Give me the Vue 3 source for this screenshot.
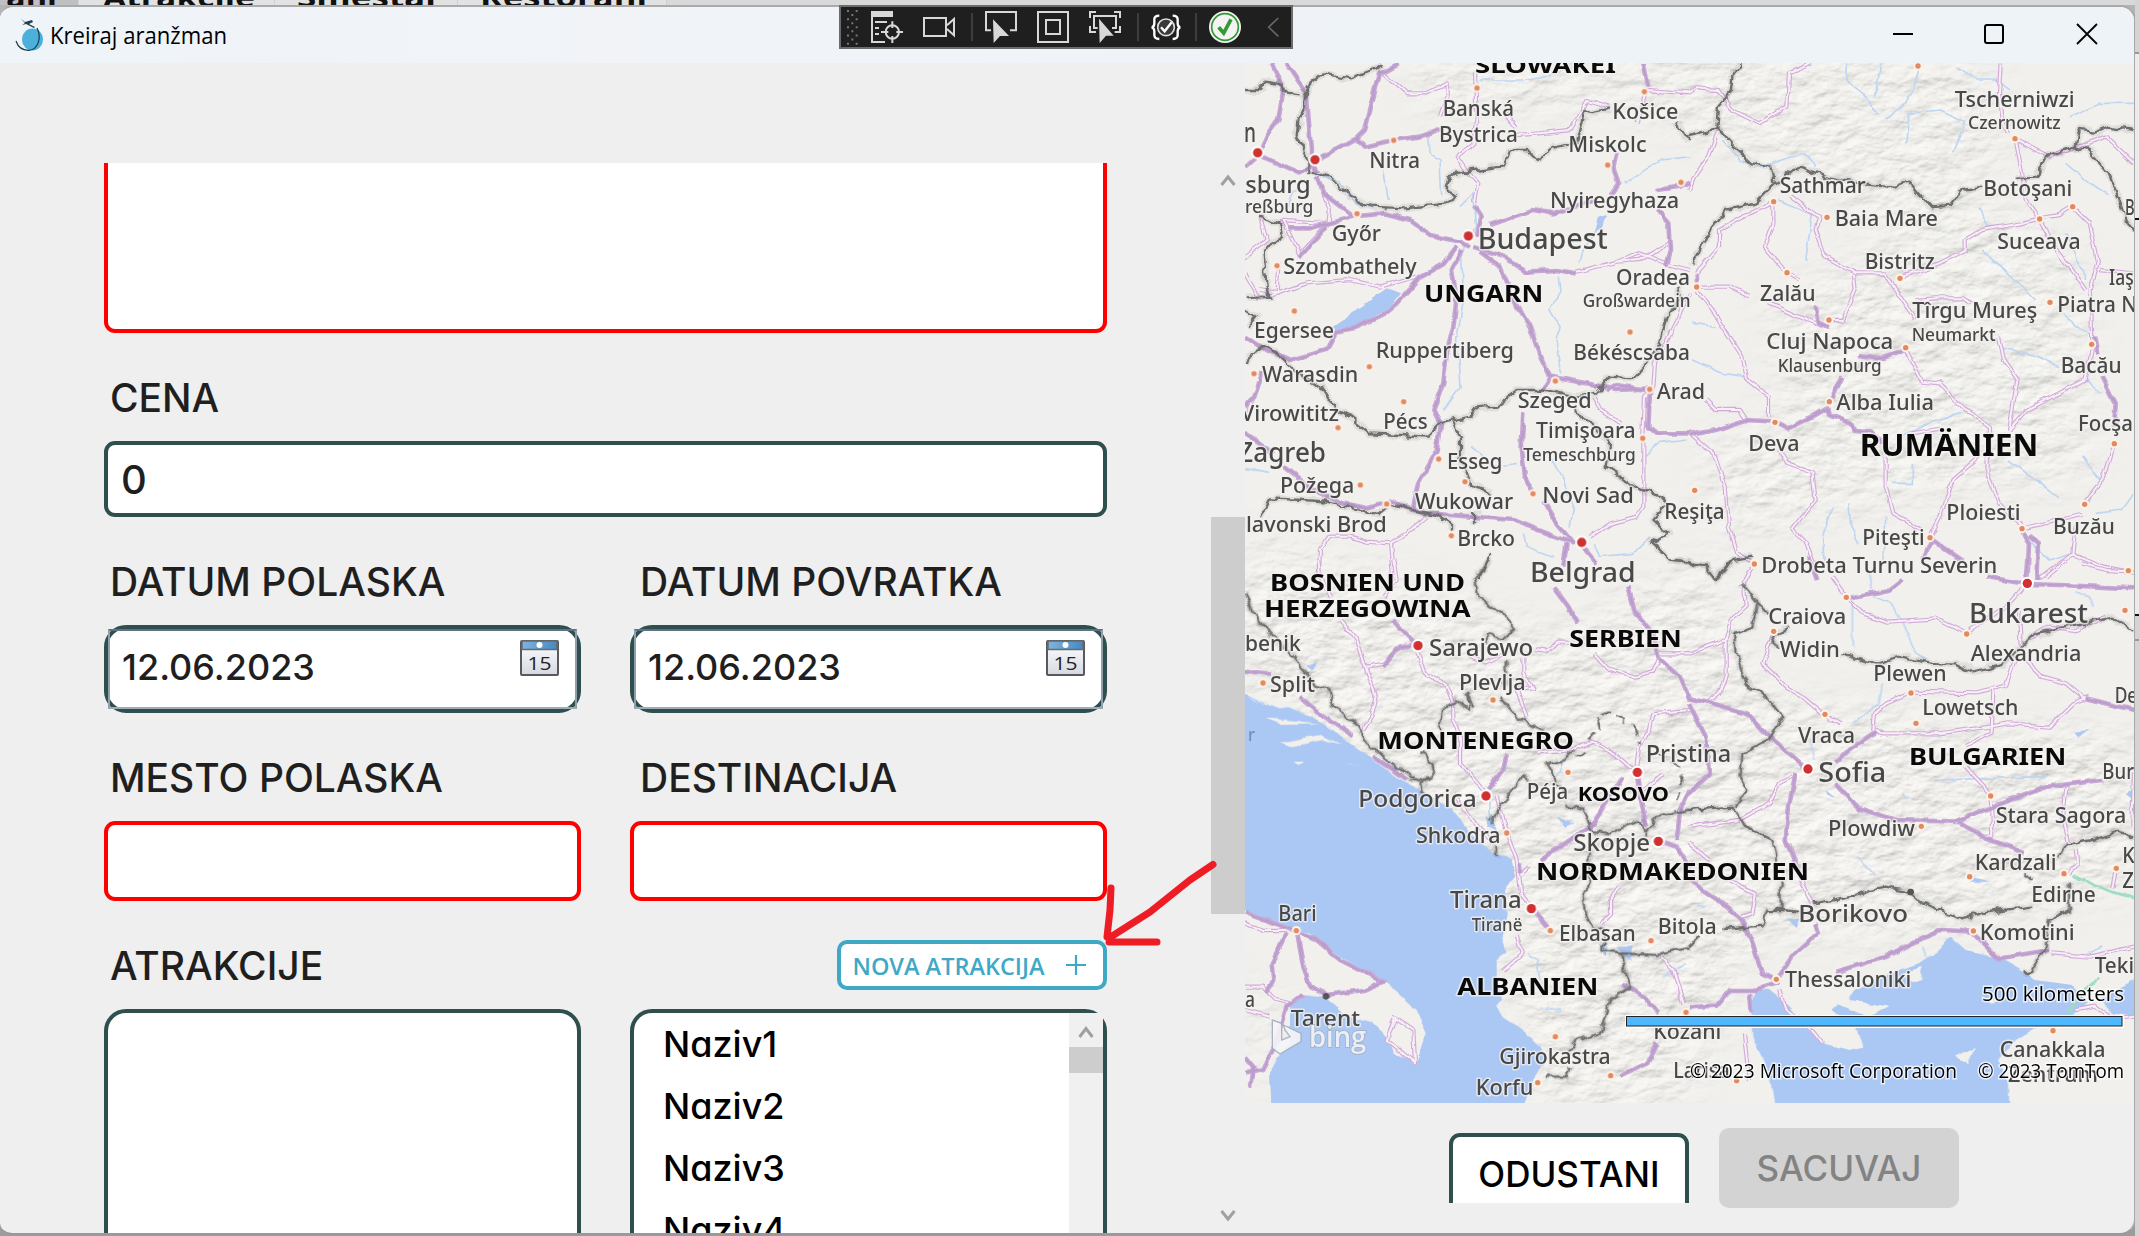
<script setup>
const tabs = [
  { text: 'ani', left: 0, width: 79, x: 6, w: 51, active: true },
  { text: 'Atrakcije', left: 79, width: 196, x: 24, w: 152 },
  { text: 'Smestaj', left: 275, width: 183, x: 22, w: 139 },
  { text: 'Restorani', left: 458, width: 209, x: 22, w: 167 },
]
const attractions = ['Naziv1', 'Naziv2', 'Naziv3', 'Naziv4']

// Every map tile is described in its own units, three per pixel.
const tiles = [
  {
    id: 'nw', x: 1240, y: 60,
    water: ['M275 800L350 750 440 685 480 700 450 740 380 785 300 815Z', 'M1060 520L1075 470 1100 460 1085 500Z'],
    rivers: [
      'M225 330L300 370 350 430 400 440', 'M660 440L700 400 710 500 665 580 670 720 650 840 660 980 610 1050',
      'M565 210L570 280 600 300 605 410', 'M430 330L445 420', 'M955 650L960 700 930 750 960 800 950 880 965 940',
      'M1350 290L1260 300 1180 350 1150 370', 'M720 60L850 60 950 40 1000 20', 'M930 1190L970 1260 1000 1350 990 1400',
      'M850 1420L860 1460 940 1490', 'M1060 1450L1080 1490 1180 1480 1230 1430', 'M15 1225L90 1240', 'M1020 610L1030 570 1070 510',
      'M690 1160L760 1220 830 1210', 'M1210 1190L1260 1150 1340 1140', 'M140 440L160 390 180 380',
    ],
    minor: [
      'M425 35L500 100 560 100 620 70 620 110', 'M705 40L710 170 700 250 650 290 690 350 715 370 705 430',
      'M830 225L900 220 990 210 1040 120 1110 140', 'M790 150L830 200', 'M1215 90L1350 100', 'M600 165L620 110',
      'M60 690L110 700 200 670 330 660 420 680 530 650', 'M115 610L110 700 50 715', 'M240 380L270 450 265 490 180 580 130 480 270 490',
      'M15 590L80 540 60 470', 'M1010 635L1130 605 1200 600 1270 560 1290 540', 'M1245 910L1240 980 1215 1010 1210 1130 1210 1340 1190 1370 1110 1390 1050 1430',
      'M1060 1010L1080 1050 1140 1090', 'M560 1370L500 1420 450 1450 460 1560', 'M235 1560L240 1470 270 1430 330 1430 380 1445 450 1450',
      'M1350 700L1300 800 1240 920', 'M1130 605L1200 580 1290 615 1350 630', 'M1190 190L1215 90', 'M15 640L60 720', 'M40 1010L15 1080',
    ],
    major: [
      'M95 10L130 90 115 180 80 230 60 275', 'M140 10L200 100 215 300 230 340', 'M475 10L420 40 375 210 350 235 225 300',
      'M350 235L375 260 460 240 540 230 610 205', 'M50 280L110 310 180 340 220 320', 'M230 350L250 400 340 470 430 460 510 480 570 525 660 545 690 560',
      'M145 505L210 505 340 470', 'M705 440L725 470 710 530', 'M750 495L880 450 940 460 1070 420', 'M1130 280L1120 320 1135 370 1110 405',
      'M700 560L790 590 860 635 950 630 1010 640', 'M650 560L610 610 540 650 470 730 420 770 340 805 290 815 260 870 150 900 60 860 15 830',
      'M665 570L635 630 650 710 640 800 620 880 610 970 580 1050 600 1090 590 1170 535 1270 520 1340', 'M720 575L780 620 830 740 870 800 900 890 930 950 1040 970 1130 990 1230 985',
      'M930 955L910 990', 'M130 1220L220 1290 310 1330 380 1345 450 1325 560 1360 700 1370 820 1380 970 1440 1020 1450', 'M850 1060L845 1160 855 1250 880 1300',
      'M910 1320L950 1390 1000 1450', 'M1230 990L1225 1100 1250 1120 1350 1120', 'M1250 390L1320 380 1350 365', 'M1250 450L1285 490 1290 570 1275 620', 'M65 940L40 1010 15 1040',
      'M980 1450L970 1520', 'M1020 1450L1070 1510', 'M15 1120L100 1180', 'M1210 10L1225 80', 'M15 320L60 280', 'M180 590L260 500', 'M1100 995L1130 975 1220 990',
    ],
    borders: [
      'M15 90L60 90 80 65 130 75 135 95 185 100', 'M205 340L205 290 170 230 175 180 190 150 195 100 210 75 250 40 330 55 410 25 425 10',
      'M215 335L270 350 320 400 390 440 500 445 620 430 650 410 620 390 630 345 700 330 790 320 810 270 860 270 890 300 950 260 1010 250 1035 160 1110 145',
      'M1310 185L1330 225 1350 235', 'M60 470L120 490 130 530 70 570 80 680 90 710 20 715', 'M15 755L50 770 25 800', 'M20 915L30 880 70 860 110 880 160 930 240 980 270 1030 330 1070 390 1120 480 1125 560 1130 600 1090 690 1070 710 1045 770 1040 830 990 900 990 950 1000 1000 1010 1070 1000 1110 950 1180 955 1210 920 1260 850 1280 770 1320 720 1315 680',
      'M640 1085L660 1130 660 1190 690 1270 750 1300', 'M60 1370L90 1315 190 1320 260 1325 330 1345 410 1365 450 1330 520 1350 590 1365 630 1390 630 1410', 'M705 1350L705 1390', 'M1000 1050L1060 1090 1110 1150 1100 1220 1180 1280 1260 1310 1290 1340', 'M1275 1340L1240 1380 1285 1420 1240 1450 1290 1500 1350 1505', 'M755 1480L715 1560',
    ],
    capitals: [[53, 278], [225, 299], [685, 528], [1025, 1447]],
    towns: [[711, 84], [1213, 95], [461, 241], [351, 461], [1103, 315], [1323, 367], [111, 617], [163, 753], [388, 920], [42, 941], [491, 1025], [294, 1103], [946, 963], [1229, 988], [1208, 1135], [1170, 816], [596, 1197], [675, 1265], [361, 1275], [440, 1332], [879, 1301], [634, 1427]],
    labels: [
      ['SLOWAKEI', 705, 1128, 38, 'country', 66], ['Banská', 608, 822, 168], ['Bystrica', 597, 834, 247], ['Košice', 1117, 1315, 178], ['Miskolc', 985, 1220, 277], ['Nitra', 388, 540, 325],
      ['n', 12, 48, 245, '', 84], ['sburg', 16, 212, 400, '', 72], ['reßburg', 15, 220, 460, '', 54], ['Nyiregyhaza', 930, 1318, 445], ['Győr', 275, 423, 543], ['Budapest', 713, 1103, 568, '', 86],
      ['Szombathely', 130, 530, 643], ['UNGARN', 552, 910, 725, 'country', 70], ['Oradea', 1128, 1350, 675], ['Großwardein', 1028, 1352, 742, '', 54], ['Egersee', 42, 282, 835], ['Ruppertiberg', 407, 822, 895],
      ['Békéscsaba', 1000, 1350, 900], ['Warasdin', 66, 355, 965], ['Virowititz', 2, 297, 1082], ['Pécs', 430, 563, 1108], ['Szeged', 833, 1055, 1043], ['Timişoara', 888, 1187, 1133], ['Temeschburg', 850, 1187, 1203, '', 54],
      ['Zagreb', -5, 258, 1205, '', 80], ['Esseg', 621, 787, 1228], ['Požega', 120, 343, 1298], ['Novi Sad', 907, 1182, 1330], ['Wukowar', 525, 820, 1348], ['lavonski Brod', 18, 440, 1415], ['Brcko', 652, 825, 1457], ['Arad', 1250, 1395, 1018], ['Reşiţa', 1273, 1454, 1378],
    ],
  },
  {
    id: 'ne', x: 1689, y: 60,
    water: [],
    rivers: [
      'M470 10L480 70 530 110 570 160', 'M690 30L670 100 590 180', 'M650 250L660 160 750 150 830 190 790 280', 'M800 20L860 60 920 60 960 90', 'M1140 170L1230 130 1335 130',
      'M100 240L150 300 220 320 280 300 340 280 380 320', 'M270 420L370 460 350 600', 'M870 440L900 500 960 500', 'M880 570L960 640 1040 720', 'M1120 760L1210 830', 'M10 900L100 940 170 950', 'M15 790L80 800',
      'M940 860L1040 890 1110 920', 'M670 1210L670 1270 610 1270', 'M960 1200L1080 1290 1110 1310', 'M1180 1190L1240 1270', 'M430 1340L400 1420 405 1500', 'M590 1370L585 1500', 'M480 1330L485 1400 510 1450', 'M1000 1420L1080 1500 1140 1480', 'M1220 1360L1300 1350 1335 1300', 'M640 1130L740 1080 820 1060', 'M1190 960L1240 1000', 'M1130 310L1200 370 1260 400', 'M1130 520L1190 660', 'M575 10L560 110',
    ],
    minor: [
      'M370 10L300 40 295 140 210 190 130 150 90 90 20 85 0 100', 'M90 205L60 290 15 350 0 390', 'M250 425L250 490 225 560 290 635 330 660', 'M250 430L160 470 90 510 90 560 20 640',
      'M305 405L390 470 380 510 410 590 500 640 590 640 620 690 680 780', 'M630 655L750 610 830 570 830 540 880 510 1000 490 1050 475 1110 465 1150 440 1200 490 1225 610 1205 690 1210 850', 'M495 645L500 690 460 780 420 780', 'M680 720L740 715 820 715 850 730', 'M930 830L945 900 985 960 960 1110',
      'M650 865L700 965 750 970 830 1050 900 1100 895 1240 930 1330 1000 1405', 'M20 680L120 680 180 710', 'M240 730L350 780 420 800', 'M25 690L90 780 160 890 175 960 240 1010 240 1070', 'M50 1020L80 1050 150 1050 170 1080', 'M0 1120L80 1190 110 1280 120 1400 145 1480 190 1510', 'M270 1170L290 1210 370 1240 380 1320 310 1410 350 1450 380 1520', 'M590 1190L590 1280 610 1360 700 1410', 'M870 1190L790 1260 760 1360 725 1430', 'M960 1110L1010 1050 1090 1010 1190 960 1210 860',
      'M1275 1150L1240 1260 1185 1330', 'M1000 1405L1180 1365', 'M1160 1400L1150 1480 1050 1555', 'M1150 1480L1240 1520 1320 1535', 'M935 10L930 100 940 170 960 220', 'M980 240L1000 340 1010 420 1050 475', 'M985 240L1080 290 1250 230 1335 310', 'M1050 475L1110 580 1190 690', 'M670 1120L760 1105', 'M1230 630L1335 640',
    ],
    major: ['M0 1125L80 1110 170 1080 260 1085 300 1105 370 1070 415 1045 420 1065 490 1090 500 1110 550 1115 580 1150', 'M460 950L425 1025', 'M510 885L580 895 650 870', 'M20 640L22 690', 'M380 740L390 790 420 800', 'M725 1435L820 1500', 'M1000 1410L1020 1450 1015 1560', 'M1020 1425L1050 1450 1045 1560', 'M1240 950L1280 1030 1275 1100', 'M1215 830L1225 880', 'M385 1560L360 1490', 'M725 1440L700 1500'],
    borders: ['M155 10L130 50 125 100 90 140 85 205 0 225', 'M85 205L140 265 190 310 250 320 260 370 200 430 110 450 50 530 10 620', 'M260 370L320 320 380 340 440 360 530 370 620 380 660 365 690 400 730 445 780 440 820 390 880 380', 'M980 360L1040 350 1070 290 1160 260 1170 210 1220 215 1260 200 1335 210', 'M1150 260L1200 270 1260 340 1295 430 1310 480 1335 510', 'M0 1505L50 1515 80 1555 130 1500 190 1490'],
    capitals: [],
    towns: [[687, 18], [978, 236], [254, 425], [414, 472], [1052, 477], [1151, 440], [294, 638], [633, 655], [23, 681], [1083, 727], [420, 780], [650, 863], [1208, 853], [421, 1025], [258, 1087], [1276, 1151], [17, 1291], [1187, 1333], [999, 1406], [723, 1433], [196, 1511], [1318, 1532]],
    labels: [
      ['Tscherniwzi', 797, 1157, 142], ['Czernowitz', 837, 1115, 208, '', 54], ['Sathmar', 272, 530, 398], ['Baia Mare', 437, 747, 497], ['Botoşani', 883, 1150, 407], ['Suceava', 925, 1175, 567], ['Bistritz', 527, 737, 628], ['Zalău', 213, 380, 722], ['Tîrgu Mureş', 670, 1045, 775], ['Neumarkt', 668, 920, 842, '', 54],
      ['Piatra N', 1105, 1345, 757], ['Iaş', 1260, 1334, 675], ['Cluj Napoca', 232, 613, 867], ['Klausenburg', 266, 578, 935, '', 54], ['Bacău', 1115, 1298, 940], ['Alba Iulia', 442, 735, 1050], ['Focşa', 1167, 1332, 1112], ['Deva', 178, 332, 1172], ['RUMÄNIEN', 512, 1048, 1187, 'country', 92], ['Ploiesti', 772, 995, 1380], ['Piteşti', 520, 707, 1455], ['Buzău', 1092, 1278, 1422], ['Drobeta Turnu Severin', 217, 925, 1540], ['B', 1308, 1337, 465],
    ],
  },
  {
    id: 'sw', x: 1240, y: 560,
    water: [
      'M0 395L60 420 130 435 200 465 250 490 330 550 400 600 480 660 560 700 640 750 690 820 760 880 815 900 825 950 795 990 800 1060 785 1130 800 1180 770 1200 770 1260 790 1320 765 1340 790 1370 850 1410 900 1460 920 1500 880 1560 840 1660 95 1660 90 1540 120 1490 150 1440 150 1340 180 1300 250 1310 320 1370 400 1390 440 1430 460 1480 530 1510 560 1420 530 1350 440 1270 300 1190 210 1120 150 1110 60 1070 0 1045Z',
      'M735 770L760 790 780 820 740 800Z', 'M1130 1160L1175 1160 1175 1195 1150 1190Z', 'M1075 1150L1105 1165 1100 1190Z', 'M195 320L235 305 215 335Z', 'M950 770L1000 790 975 800Z',
    ],
    islands: ['M65 425L110 415 180 435 120 445Z', 'M75 475L150 480 235 490 120 492Z', 'M120 550L180 535 240 525 310 555 250 540 150 560Z', 'M300 602L370 622 330 612Z', 'M160 605L190 605 175 615Z', 'M20 408L60 425 40 420Z'],
    rivers: ['M970 600L950 650', 'M860 1180L890 1200 900 1260', 'M750 720L750 780', 'M1270 1250L1340 1210', 'M900 1340L960 1350'],
    minor: [
      'M235 0L240 40 270 110', 'M460 0L470 60 430 110', 'M300 180L350 240 380 330 410 410 395 470 370 510', 'M530 270L560 340 620 380 640 430 640 480 660 520 660 610 735 700', 'M380 320L440 310 470 270 500 250', 'M690 290L740 310 800 280', 'M850 290L850 340 880 385 830 390 860 470', 'M890 270L920 275 950 245 990 245', 'M1060 280L1100 325 1190 350 1240 335 1260 290', 'M1260 280L1350 280', 'M640 700L700 780 760 850', 'M770 710L800 820 830 900 840 1000 870 1040', 'M830 1125L845 1180 790 1230', 'M870 920L850 940', 'M1140 980L1110 1020 1110 1060 1080 1090', 'M890 580L1000 570 1060 545 1110 570 1180 630', 'M1260 1190L1300 1230 1330 1330', 'M460 1370L520 1410 525 1510 440 1440 470 1370', 'M15 1090L70 1110 160 1110', 'M15 1280L70 1280 110 1320 150 1330', 'M15 1350L90 1370', 'M1190 630L1200 560 1230 510 1240 460 1350 450', 'M1270 640L1200 700',
    ],
    major: ['M940 80L985 140 1010 190', 'M1165 80L1185 160 1240 220 1255 290 1320 350 1350 420', 'M460 180L530 255 480 260 430 320', 'M15 335L90 345', 'M180 410L250 470 340 530', 'M400 590L500 660', 'M800 580L790 630 745 690', 'M1150 650L1060 790 900 900', 'M1190 640L1200 710 1220 800', 'M875 1045L930 1110', 'M15 1055L150 1105 230 1140 300 1200 430 1265 370 1290 260 1305 210 1275 190 1220 170 1115', 'M140 1120L95 1210 100 1260 80 1300', 'M190 1300L140 1340 100 1470 70 1530 15 1540', 'M1350 690L1320 750 1310 840', 'M1250 840L1310 860 1350 920', 'M1150 1270L1210 1310 1255 1360', 'M1250 1450L1220 1510 1140 1550', 'M15 1490L40 1520 30 1580', 'M840 910L840 940'],
    borders: ['M745 0L705 60 715 110 800 170 825 210 790 235 740 220 740 250', 'M15 100L40 160 90 220 150 280 190 330 230 375 265 385 280 440 350 490 370 540 430 590 510 650 570 665', 'M800 300L800 340 790 370', 'M700 440L680 395 690 450 650 420 605 450 600 510', 'M780 410L830 470 880 500 910 510', 'M545 575L580 620 575 655 545 665 545 700', 'M1000 570L970 600 920 610 940 650 970 700', 'M750 785L850 645 865 670', 'M970 735L1030 750 1055 810 1110 820 1200 780 1220 820 1250 770 1350 750', 'M1050 870L1045 980 1030 1000 1040 1070 1055 1100 1090 1110 1090 1175 1140 1180 1250 1185 1350 1165', 'M1145 1180L1150 1220 1170 1280 1110 1320 1080 1420 1010 1440 980 1480', 'M765 860L770 895', 'M920 1550L980 1550 990 1520', 'M1300 0L1350 5'],
    dashed: ['M1045 545L1080 505 1070 470 1100 455 1160 485 1190 510 1200 550', 'M1010 590L1050 570', 'M1250 580L1310 610 1330 650 1310 720'],
    capitals: [[534, 257], [738, 708], [1192, 637], [1255, 844], [874, 1046]],
    towns: [[69, 369], [759, 420], [984, 637], [800, 819], [169, 1112], [931, 1112], [1233, 1142], [1338, 1357], [946, 1430], [1112, 1547], [893, 1568]],
    darks: [[258, 1309]],
    labels: [
      ['BOSNIEN UND', 90, 675, 92, 'country', 70], ['HERZEGOWINA', 72, 692, 170, 'country', 70], ['Belgrad', 870, 1187, 67, '', 84], ['benik', 15, 182, 272], ['Sarajewo', 567, 880, 288, '', 70], ['SERBIEN', 988, 1325, 262, 'country', 70], ['Split', 90, 225, 395], ['Plevlja', 657, 857, 390], ['r', 24, 45, 543, 'sea', 54],
      ['MONTENEGRO', 412, 1002, 566, 'country', 70], ['Pristina', 1217, 1474, 605, '', 68], ['Podgorica', 355, 710, 742, '', 72], ['Péja', 860, 985, 717], ['KOSOVO', 1013, 1287, 722, 'country', 60], ['Shkodra', 528, 782, 850], ['Skopje', 1000, 1230, 872, '', 70], ['NORDMAKEDONIEN', 888, 1707, 960, 'country', 70],
      ['Tirana', 630, 845, 1045, '', 70], ['Tiranë', 695, 847, 1112, '', 54], ['Bari', 115, 230, 1082], ['Elbasan', 957, 1187, 1142], ['Bitola', 1253, 1430, 1122], ['ALBANIEN', 652, 1075, 1305, 'country', 70], ['a', 15, 45, 1340], ['Tarent', 152, 360, 1397], ['Gjirokastra', 778, 1112, 1512], ['Korfu', 707, 880, 1605], ['Kozani', 1240, 1444, 1438], ['Larisa', 1300, 1469, 1555],
    ],
  },
  {
    id: 'se', x: 1689, y: 560,
    water: [
      'M190 1430L185 1330 200 1285 240 1290 300 1340 350 1400 400 1450 480 1470 520 1460 505 1410 430 1350 450 1330 540 1370 600 1340 480 1320 500 1290 600 1240 690 1210 760 1160 785 1130 830 1170 930 1190 1000 1230 1040 1260 1150 1275 1200 1330 1140 1370 1050 1400 980 1440 930 1500 960 1560 960 1660 260 1660 240 1540 210 1480Z',
      'M1240 1310L1335 1260 1345 1370 1260 1360Z', 'M1155 515L1195 510 1170 530Z', 'M290 1075L330 1080 320 1105Z', 'M820 940L900 965 850 965Z', 'M1310 700L1340 680 1340 720Z', 'M410 690L440 715 415 705Z',
    ],
    islands: ['M640 1240L700 1220 700 1260 670 1270Z', 'M880 1310L930 1320 910 1335Z', 'M800 1490L860 1460 840 1510Z'],
    rivers: ['M490 130L490 260', 'M550 110L610 130 640 190 680 280 710 295', 'M540 30L550 90', 'M580 370L570 430 530 460 490 490', 'M370 540L370 600', 'M750 660L900 655 1070 650', 'M1160 95L1200 110 1210 140', 'M500 890L560 950', 'M20 1040L50 1040', 'M640 700L660 720', 'M700 1160L710 1190', 'M1200 1180L1240 1160'],
    green: ['M1150 945L1250 990 1335 1015', 'M1230 1250L1170 1310 1140 1360'],
    minor: [
      'M190 20L165 70 170 140 125 180 110 240 0 280', 'M110 240L110 350 90 400 50 430', 'M255 215L220 310 290 380 340 410 405 465 455 490', 'M430 50L475 115 520 160 600 185 740 175 830 220', 'M840 220L960 130 1010 75', 'M990 150L995 260', 'M980 290L950 380 860 400 680 395 590 430 555 460 550 510 580 520 750 520 900 500 960 490 1080 500 1150 430 1200 410', 'M910 390L905 520 830 560', 'M830 620L905 700 910 830 870 830', 'M1010 300L1060 350 1130 370 1190 420', 'M310 650L270 670 240 730 150 780 0 800', 'M1130 680L1120 760 1140 850', 'M1160 870L1165 910 1140 940', 'M1270 985L1280 930', 'M1090 1180L1200 1190 1335 1160', 'M1160 1350L1220 1340 1270 1380 1335 1370', 'M100 950L200 1000 190 1060 160 1070', 'M300 850L340 970 370 1030', 'M30 960L0 940', 'M270 1290L290 1350 360 1400 400 1450', 'M1070 50L1130 0', 'M1180 10L1250 30 1335 35', 'M0 850L60 900', 'M1020 235L1080 200 1160 210 1250 170', 'M1335 640L1330 800', 'M165 1420L180 1560',
    ],
    major: ['M0 415L60 430 180 465 250 540 350 625', 'M0 430L50 530 60 640 0 700', 'M475 115L600 90 640 60', 'M890 50L1010 72 1110 75 1335 85', 'M440 610L480 570 560 515', 'M440 670L510 745 620 780 800 785 910 740 1080 680 1240 660', 'M810 785L890 835 1010 880', 'M320 640L300 740 290 840 340 960', 'M0 960L100 1030 160 1080 190 1150 220 1240 260 1260', 'M375 1090L390 1120 310 1190 270 1250', 'M270 1265L190 1290 120 1290 80 1340 0 1345', 'M440 1235L590 1190 700 1135 760 1110 850 1115 900 1165 930 1195 1080 1170', 'M1190 415L1335 450', 'M180 1300L185 1360', 'M1015 0L1010 60'],
    borders: ['M0 10L50 15 80 60 130 5', 'M160 70L205 130 190 200 135 220 140 280 170 370 240 420 280 470 240 540 160 580 155 650 175 690 140 740', 'M205 130L235 160', 'M300 205L250 230 265 265', 'M460 280L560 315 640 290 740 310 800 310 850 335 940 315 1010 250 1040 220 1180 190 1270 170 1335 210', 'M0 750L60 745 130 740 170 800 250 840 265 900', 'M275 960L275 1050 330 1055', 'M275 1050L235 1050 220 1100 100 1110', 'M375 1030L500 1010 540 990 590 980 660 995 700 1030 820 1075 900 1055 1030 1040', 'M1010 940L1030 960', 'M1110 895L1135 855 1210 840 1290 815 1335 835', 'M1140 970L1140 1050 1080 1080 1070 1160 1030 1230 1000 1235', 'M0 1160L30 1130'],
    capitals: [[1015, 70], [357, 627]],
    towns: [[472, 112], [196, 12], [254, 214], [833, 222], [1308, 151], [666, 399], [408, 463], [681, 490], [905, 708], [697, 799], [1125, 941], [842, 950], [1282, 925], [853, 1113], [262, 1258], [1092, 1412], [143, 1562]],
    darks: [[665, 996]],
    labels: [
      ['Craiova', 238, 472, 192], ['Bukarest', 840, 1197, 188, '', 84], ['Widin', 272, 453, 292], ['Alexandria', 845, 1177, 303], ['Plewen', 553, 773, 363], ['Lowetsch', 700, 988, 465], ['De', 1277, 1345, 430], ['Vraca', 327, 498, 550], ['BULGARIEN', 660, 1132, 615, 'country', 70], ['Bur', 1240, 1335, 656], ['Sofia', 388, 592, 665, '', 84],
      ['Stara Sagora', 920, 1312, 790], ['Plowdiw', 417, 678, 828], ['Kardzali', 857, 1103, 930], ['K', 1300, 1337, 910], ['Z', 1300, 1335, 985], ['Edirne', 1027, 1220, 1025], ['Borikovo', 328, 657, 1085, '', 72], ['Komotini', 872, 1157, 1140], ['Teki', 1217, 1335, 1240], ['Thessaloniki', 288, 667, 1282], ['Canakkala', 932, 1250, 1490], ['Zentrum', 957, 1227, 1565],
    ],
  },
]
const place = (t) => `translate(${t.x} ${t.y}) scale(.333333)`
</script>

<template>
  <div class="desktop">
    <div class="tabstrip">
      <div v-for="t in tabs" :key="t.text" class="tab" :class="{ active: t.active }" :style="{ width: t.width + 'px' }">
        <svg :width="t.width" height="10"><text :x="t.x" y="7" :textLength="t.w" lengthAdjust="spacingAndGlyphs">{{ t.text }}</text></svg>
      </div>
    </div>

    <div class="window">
      <header class="titlebar">
        <svg class="logo" width="30" height="34" viewBox="0 0 30 34">
          <ellipse cx="17.5" cy="21.5" rx="10.5" ry="11" fill="#4bb1dc" />
          <path d="M1 23C3 29 8 32.500 14 32.300 23 31.500 27 20 22 10" fill="none" stroke="#1d3a4a" stroke-width="1.2" />
          <path d="M6 1L10 4 17 2 18 4 14 6 20 9 19 10 11 6 7 7 10 5Z" fill="#243f50" />
        </svg>
        <svg class="title" width="180" height="40"><text x="0" y="26" textLength="177" lengthAdjust="spacingAndGlyphs">Kreiraj aranžman</text></svg>
        <svg class="controls" width="204" height="20" viewBox="0 0 204 20" fill="none" stroke="#000" stroke-width="2">
          <path d="M0 10H20" /><rect x="92" y="1" width="18" height="18" rx="2" /><path d="M184 0L204 20M204 0L184 20" stroke-width="1.800" />
        </svg>
      </header>

      <div class="body">
        <section class="form">
          <div class="scroll">
            <div class="box notes error"></div>
            <div class="label"><span style="">CENA</span></div>
            <div class="box price"><span>0</span></div>

            <div class="row">
              <div class="col">
                <div class="label">DATUM POLASKA</div>
                <div class="box date"><div class="inner"><span>12.06.2023</span>
                  <svg class="cal" width="39" height="36" viewBox="0 0 39 36"><use href="#calendar" /></svg>
                </div></div>
              </div>
              <div class="col">
                <div class="label second">DATUM POVRATKA</div>
                <div class="box date"><div class="inner"><span>12.06.2023</span>
                  <svg class="cal" width="39" height="36" viewBox="0 0 39 36">
                    <defs>
                      <linearGradient id="sky"><stop stop-color="#7fb4de" /><stop offset="1" stop-color="#4788c4" /></linearGradient>
                      <linearGradient id="page" x2="0" y2="1"><stop stop-color="#fff" /><stop offset="1" stop-color="#d6d9e2" /></linearGradient>
                      <g id="calendar">
                        <rect x="1" y="1" width="37" height="34" rx="1" fill="url(#page)" stroke="#57595c" stroke-width="2" />
                        <rect x="2" y="1" width="35" height="8.500" fill="url(#sky)" stroke="#676b6e" stroke-width="1.500" />
                        <circle cx="19.500" cy="5" r="3" fill="#fff" />
                        <text x="7.500" y="29.500" textLength="24" lengthAdjust="spacingAndGlyphs" font-family="Open Sans, sans-serif" font-size="19" fill="#222">15</text>
                      </g>
                    </defs>
                    <use href="#calendar" />
                  </svg>
                </div></div>
              </div>
            </div>

            <div class="row">
              <div class="col"><div class="label">MESTO POLASKA</div><div class="box place error"></div></div>
              <div class="col"><div class="label second">DESTINACIJA</div><div class="box place error"></div></div>
            </div>

            <div class="row">
              <div class="col"><div class="label">ATRAKCIJE</div><div class="box list"></div></div>
              <div class="col">
                <div class="label right">
                  <button class="add">
                    <svg width="262" height="42"><text x="11.500" y="31" textLength="192" lengthAdjust="spacingAndGlyphs">NOVA ATRAKCIJA</text><path d="M225 21H245M235 11V31" stroke="#3fa9c5" stroke-width="2.200" /></svg>
                  </button>
                </div>
                <div class="box list filled">
                  <ul><li v-for="a in attractions" :key="a">{{ a }}</li></ul>
                  <div class="bar">
                    <svg width="34" height="34"><path d="M10.500 24L17 15.500 23.500 24" /></svg>
                    <div class="mini"></div>
                  </div>
                </div>
              </div>
            </div>
          </div>
          <div class="track">
            <svg width="34" height="34"><path d="M10.500 22L17 14 23.500 22" /></svg>
            <div class="thumb"></div>
            <svg class="down" width="34" height="34"><path d="M10.500 13L17 21 23.500 13" /></svg>
          </div>
        </section>

        <section class="side">
          <svg class="map" width="889" height="1040" viewBox="1245 63 889 1040">
            <defs>
              <filter id="rough" filterUnits="userSpaceOnUse" x="1240" y="58" width="900" height="1050">
                <feTurbulence type="fractalNoise" baseFrequency=".09" numOctaves="2" seed="4" result="n" />
                <feDisplacementMap in="SourceGraphic" in2="n" scale="9" xChannelSelector="R" yChannelSelector="G" />
              </filter>
              <filter id="wobble" filterUnits="userSpaceOnUse" x="1240" y="58" width="900" height="1050">
                <feTurbulence type="fractalNoise" baseFrequency=".06" numOctaves="2" seed="9" result="n" />
                <feDisplacementMap in="SourceGraphic" in2="n" scale="6" xChannelSelector="R" yChannelSelector="G" />
              </filter>
              <filter id="terrain" filterUnits="userSpaceOnUse" x="1240" y="58" width="900" height="1050">
                <feTurbulence type="fractalNoise" baseFrequency=".035 .06" numOctaves="4" seed="12" result="n" />
                <feDiffuseLighting in="n" surfaceScale="3.500" diffuseConstant="1.150" lighting-color="#efeeea"><feDistantLight azimuth="235" elevation="60" /></feDiffuseLighting>
              </filter>
              <filter id="soft"><feGaussianBlur stdDeviation="22" /></filter>
              <mask id="hills" maskUnits="userSpaceOnUse" x="1240" y="58" width="900" height="1050">
                <g fill="#fff" filter="url(#soft)">
                  <path d="M1400 50H1980L2010 150 1960 180 2080 260 2090 480 1900 500 1720 540 1700 450 1790 420 1770 300 1900 250 1840 190 1620 100 1440 120Z" opacity=".65" />
                  <path d="M1240 540L1420 590 1560 640 1700 560 1760 700 2140 740 2140 880 1900 940 1760 930 1680 1110 1540 1110 1500 900 1420 800 1240 680Z" opacity=".75" />
                  <path d="M1240 980L1290 1000 1250 1110Z" opacity=".5" />
                </g>
              </mask>
            </defs>
            <rect x="1245" y="63" width="889" height="1040" fill="#f1f0ed" />
            <g mask="url(#hills)"><rect x="1240" y="58" width="900" height="1050" filter="url(#terrain)" /></g>
            <g filter="url(#wobble)">
              <g v-for="t in tiles" :key="t.id" :transform="place(t)">
                <path v-for="p in t.water" :key="p" :d="p" fill="#abc7f3" />
                <path v-for="p in t.islands || []" :key="p" :d="p" fill="#f1f0ed" />
                <path v-for="p in t.rivers" :key="p" :d="p" class="river" />
                <path v-for="p in t.green || []" :key="p" :d="p" class="green" />
              </g>
            </g>
            <g filter="url(#wobble)">
              <g v-for="t in tiles" :key="t.id" :transform="place(t)">
                <path v-for="p in t.minor" :key="p" :d="p" class="minor" />
                <path v-for="p in t.minor" :key="p + 'i'" :d="p" class="minor-in" />
                <path v-for="p in t.major" :key="p" :d="p" class="major" />
                <path v-for="p in t.major" :key="p + 'i'" :d="p" class="major-in" />
              </g>
            </g>
            <g filter="url(#rough)">
              <g v-for="t in tiles" :key="t.id" :transform="place(t)">
                <path v-for="p in t.borders" :key="p + 's'" :d="p" class="shade" />
                <path v-for="p in t.borders" :key="p" :d="p" class="border" />
                <path v-for="p in t.dashed || []" :key="p" :d="p" class="border dash" />
              </g>
            </g>
            <g v-for="t in tiles" :key="t.id" :transform="place(t)">
              <g v-for="c in t.towns" :key="c.join()"><circle :cx="c[0]" :cy="c[1]" r="14" fill="#fdf1e6" /><circle :cx="c[0]" :cy="c[1]" r="8" fill="#e08a64" /></g>
              <g v-for="c in t.capitals" :key="c.join()"><circle :cx="c[0]" :cy="c[1]" r="20" fill="#fff" /><circle :cx="c[0]" :cy="c[1]" r="14" fill="#d03030" /></g>
              <circle v-for="c in t.darks || []" :key="c.join()" :cx="c[0]" :cy="c[1]" r="10" fill="#555" />
            </g>
            <g v-for="t in tiles" :key="t.id" :transform="place(t)">
              <text v-for="l in t.labels" :key="l[0]" :x="l[1]" :y="l[3]" :textLength="l[2] - l[1]" lengthAdjust="spacingAndGlyphs" :font-size="l[5] || 64" class="name" :class="l[4]">{{ l[0] }}</text>
            </g>
            <g transform="translate(1240 560) scale(.333333)">
              <path d="M97 1380L125 1390V1440L150 1430 135 1410 130 1395 183 1420V1445L120 1482 97 1465Z" fill="#f4f5f8" stroke="#a5aebb" stroke-width="4" opacity=".9" />
              <text x="207" y="1462" textLength="172" lengthAdjust="spacingAndGlyphs" font-size="84" class="bing">bing</text>
            </g>
            <rect x="1625" y="1015" width="499" height="13" fill="#fff" />
            <rect x="1626.500" y="1016.500" width="495.500" height="9.500" fill="#4db8ff" stroke="#222" />
            <g class="credit">
              <text x="1982" y="1001" textLength="142" lengthAdjust="spacingAndGlyphs">500 kilometers</text>
              <text x="1690" y="1078" textLength="267" lengthAdjust="spacingAndGlyphs">© 2023 Microsoft Corporation</text>
              <text x="1978" y="1078" textLength="146" lengthAdjust="spacingAndGlyphs">© 2023 TomTom</text>
            </g>
          </svg>
          <div class="actions">
            <div class="cancel">ODUSTANI</div>
            <div class="save">SACUVAJ</div>
          </div>
        </section>
      </div>
    </div>

    <svg class="edge" width="4" height="1236" viewBox="0 0 4 1236">
      <rect width="4" height="1236" fill="#d4d4d4" /><rect y="54" width="4" height="560" fill="#ececec" /><path d="M0 53H4M0 640H4" stroke="#999" stroke-width="2" /><path d="M0 219H4M0 615H4" stroke="#111" stroke-width="2" />
    </svg>

    <svg class="debugbar" width="454" height="44" viewBox="57 15 1362 132">
      <rect x="60" y="18" width="1356" height="126" fill="#1f1f1f" stroke="#6b6b6b" stroke-width="6" />
      <g stroke="#777" stroke-width="6" stroke-dasharray="6 18.500"><path d="M84 30V138M110 30V138M97 42V126" /></g>
      <g stroke="#3d3d3d" stroke-width="6"><path d="M456 39V123M954 39V123M1128 39V123" /></g>
      <g fill="none" stroke="#d8d8d8" stroke-width="6">
        <path d="M153 33H219V51H153Z" fill="#d8d8d8" stroke="none" />
        <path d="M156 45V126H195M165 66H201M165 84H177M165 102H177" />
        <circle cx="217" cy="96" r="20" /><path d="M217 64V84M217 108V129M183 96H205M229 96H249" />
        <path d="M312 54H378V108H312ZM381 76L402 57V106L381 87" />
        <path d="M513 91H498V36H588V91H570" /><path d="M519 58L567 108 540 108 521 129Z" fill="#d8d8d8" stroke="none" />
        <rect x="654" y="36" width="90" height="90" /><rect x="678" y="60" width="42" height="42" />
        <path d="M810 54V36H828M882 36H900V54M810 78V96H828M900 78V96H884M833 84H822V48H888V84H876" /><path d="M837 56L881 107 858 107 839 129Z" fill="#d8d8d8" stroke="none" />
        <path d="M1018 47Q1003 47 1003 58V70Q1003 81 995 82 1003 84 1003 94V106Q1003 117 1018 117M1058 47Q1073 47 1073 58V70Q1073 81 1081 82 1073 84 1073 94V106Q1073 117 1058 117" stroke="#fff" stroke-width="7" />
        <circle cx="1038" cy="82" r="25" fill="#3a3a3a" stroke="#ddd" stroke-width="5" /><path d="M1023 82L1034 94 1055 67" stroke="#fff" stroke-width="7" />
      </g>
      <circle cx="1215" cy="81" r="48" fill="#f3f3f3" /><circle cx="1215" cy="81" r="40" fill="none" stroke="#339933" stroke-width="5" />
      <path d="M1196 82L1211 99 1233 58" fill="none" stroke="#339933" stroke-width="11" />
      <path d="M1375 54L1346 81 1375 109" fill="none" stroke="#666" stroke-width="5" />
    </svg>

    <svg class="pointer" width="120" height="90" viewBox="1100 858 120 90" fill="none" stroke="#ee1c25" stroke-width="7" stroke-linecap="round" stroke-linejoin="round">
      <path d="M1213 864.500L1190 880 1150 912 1109 938M1111 888L1110 910 1107 937M1109 942H1157" />
    </svg>
  </div>
</template>

<style>
body { margin: 0; overflow: hidden; }
</style>

<style scoped>
* { box-sizing: border-box; }
svg { display: block; flex: none; }
.desktop { position: relative; width: 2139px; height: 1236px; background: linear-gradient(#b5b5b5 0 30px, #9c9c9c 1200px); overflow: hidden; font-family: Inter, "Open Sans", sans-serif; }
.tabstrip { display: flex; height: 5px; background: #d9d9d9; overflow: hidden; }
.tab { background: #e2e2e2; border-right: 1px solid #cfcfcf; flex: none; }
.tab.active { background: #c0c0c0; }
.tab text { font: 700 27px "Open Sans", sans-serif; fill: #111; }
.window { width: 2136px; height: 1230px; border: 2px solid #aaa; border-left: 0; border-color: #aaa #a8a8a8 #999; border-radius: 14px 16px 16px 12px; overflow: hidden; background: #efefef; display: flex; flex-direction: column; }
.titlebar { height: 56px; flex: none; display: flex; background: linear-gradient(90deg, #eef4f8, #f1f3f7 28%, #eff3f7 60%, #edf3f7); }
.logo { margin: 11px 4px 0 15px; }
.title { margin-top: 11px; margin-left: 1px; }
.title text { font: 24px "Open Sans", sans-serif; fill: #000; }
.controls { margin: 17px 37px 0 auto; overflow: visible; }
.body { display: flex; flex: 1; }
.form { width: 1245px; height: 1070px; margin-top: 100px; display: flex; overflow: hidden; }
.scroll { width: 1003px; margin-left: 104px; flex: none; }
.box { background: #fff; border: 4px solid #2f4f4f; border-radius: 11px; }
.box.error { border-color: #f00; }
.notes { height: 170px; border-top: 0; border-radius: 0 0 11px 11px; }
.label { height: 108px; padding: 20px 0 0 6px; display: flex; align-items: center; font-size: 39px; font-weight: 500; color: #1f1f1f; letter-spacing: 0; white-space: nowrap; }
.label.second { padding-left: 10px; }
.label.right { justify-content: flex-end; padding-left: 0; }
.price { height: 76px; display: flex; align-items: center; padding-left: 13px; font-size: 40px; font-weight: 500; color: #1f1f1f; }
.row { display: flex; gap: 49px; }
.col { width: 477px; }
.date { height: 88px; border-radius: 22px; position: relative; }
.inner { position: absolute; inset: 0; border: 2px solid; border-color: #5d7282 #8fa0ab #a0abb5; display: flex; align-items: center; padding: 0 16px 5px 12px; font-size: 36px; font-weight: 500; color: #1f1f1f; }
.cal { margin: 0 0 17px auto; }
.place { height: 80px; }
.list { height: 300px; border-radius: 22px; }
.filled { display: flex; padding: 0; }
ul { list-style: none; margin: 0; padding: 0 0 0 29px; flex: 1; }
li { height: 62px; line-height: 62px; font-size: 36px; font-weight: 500; color: #000; font-feature-settings: "cv11", "ss01" 0; }
.bar { width: 34px; background: #f0f0f0; }
.bar path, .track path { fill: none; stroke: #a0a0a0; stroke-width: 3; }
.mini { height: 26px; background: #cdcdcd; }
.add { width: 270px; height: 50px; padding: 0; border: 4px solid #3fa9c5; border-radius: 10px; background: #fff; }
.add text { font: 600 24px "Open Sans", sans-serif; fill: #3fa9c5; }
.track { width: 34px; margin-left: auto; display: flex; flex-direction: column; }
.thumb { height: 397px; margin-top: 320px; background: #cdcdcd; }
.down { margin-top: 284px; }
.side { width: 889px; }
.actions { display: flex; gap: 30px; margin: 25px 0 0 204px; }
.cancel, .save { width: 240px; display: flex; justify-content: center; font-size: 35px; font-weight: 500; white-space: nowrap; }
.cancel { height: 70px; margin-top: 5px; padding-top: 15px; line-height: 44px; border: 4px solid #2f4f4f; border-bottom: 0; border-radius: 11px 11px 0 0; background: #fff; color: #000; }
.save { height: 80px; border-radius: 10px; background: #d3d3d3; color: #838383; line-height: 80px; }
.river { fill: none; stroke: #bfd6f3; stroke-width: 5; }
.green { fill: none; stroke: #9fdcc4; stroke-width: 8; }
.minor { fill: none; stroke: #d2acd8; stroke-width: 13; stroke-linejoin: round; }
.minor-in { fill: none; stroke: #f6eff5; stroke-width: 6; stroke-linejoin: round; }
.major { fill: none; stroke: #c8a8d4; stroke-width: 14; stroke-linejoin: round; }
.major-in { fill: none; stroke: #b99ccb; stroke-width: 5; stroke-linejoin: round; }
.shade { fill: none; stroke: #000; stroke-opacity: .07; stroke-width: 22; stroke-linejoin: round; }
.border { fill: none; stroke: #6e6e6e; stroke-width: 7; stroke-linejoin: round; }
.dash { stroke-dasharray: 32 20; }
.name { font-family: "Noto Sans", "Open Sans", sans-serif; fill: #484848; stroke: #f3f2ef; stroke-opacity: .75; stroke-width: 9; paint-order: stroke; stroke-linejoin: round; font-weight: 500; }
.name.country { font-weight: 700; fill: #0a0a0a; }
.name.sea { fill: #6f8fc0; stroke: none; }
.bing { font-family: "Open Sans", sans-serif; font-weight: 600; fill: #e9eef7; stroke: #a5aebb; stroke-width: 5; paint-order: stroke; }
.credit text { font: 20px "Open Sans", sans-serif; fill: #000; stroke: #fff; stroke-width: 3; stroke-opacity: .7; paint-order: stroke; }
.edge { position: absolute; right: 0; top: 0; }
.debugbar { position: absolute; left: 839px; top: 5px; }
.pointer { position: absolute; left: 1100px; top: 858px; }
</style>
